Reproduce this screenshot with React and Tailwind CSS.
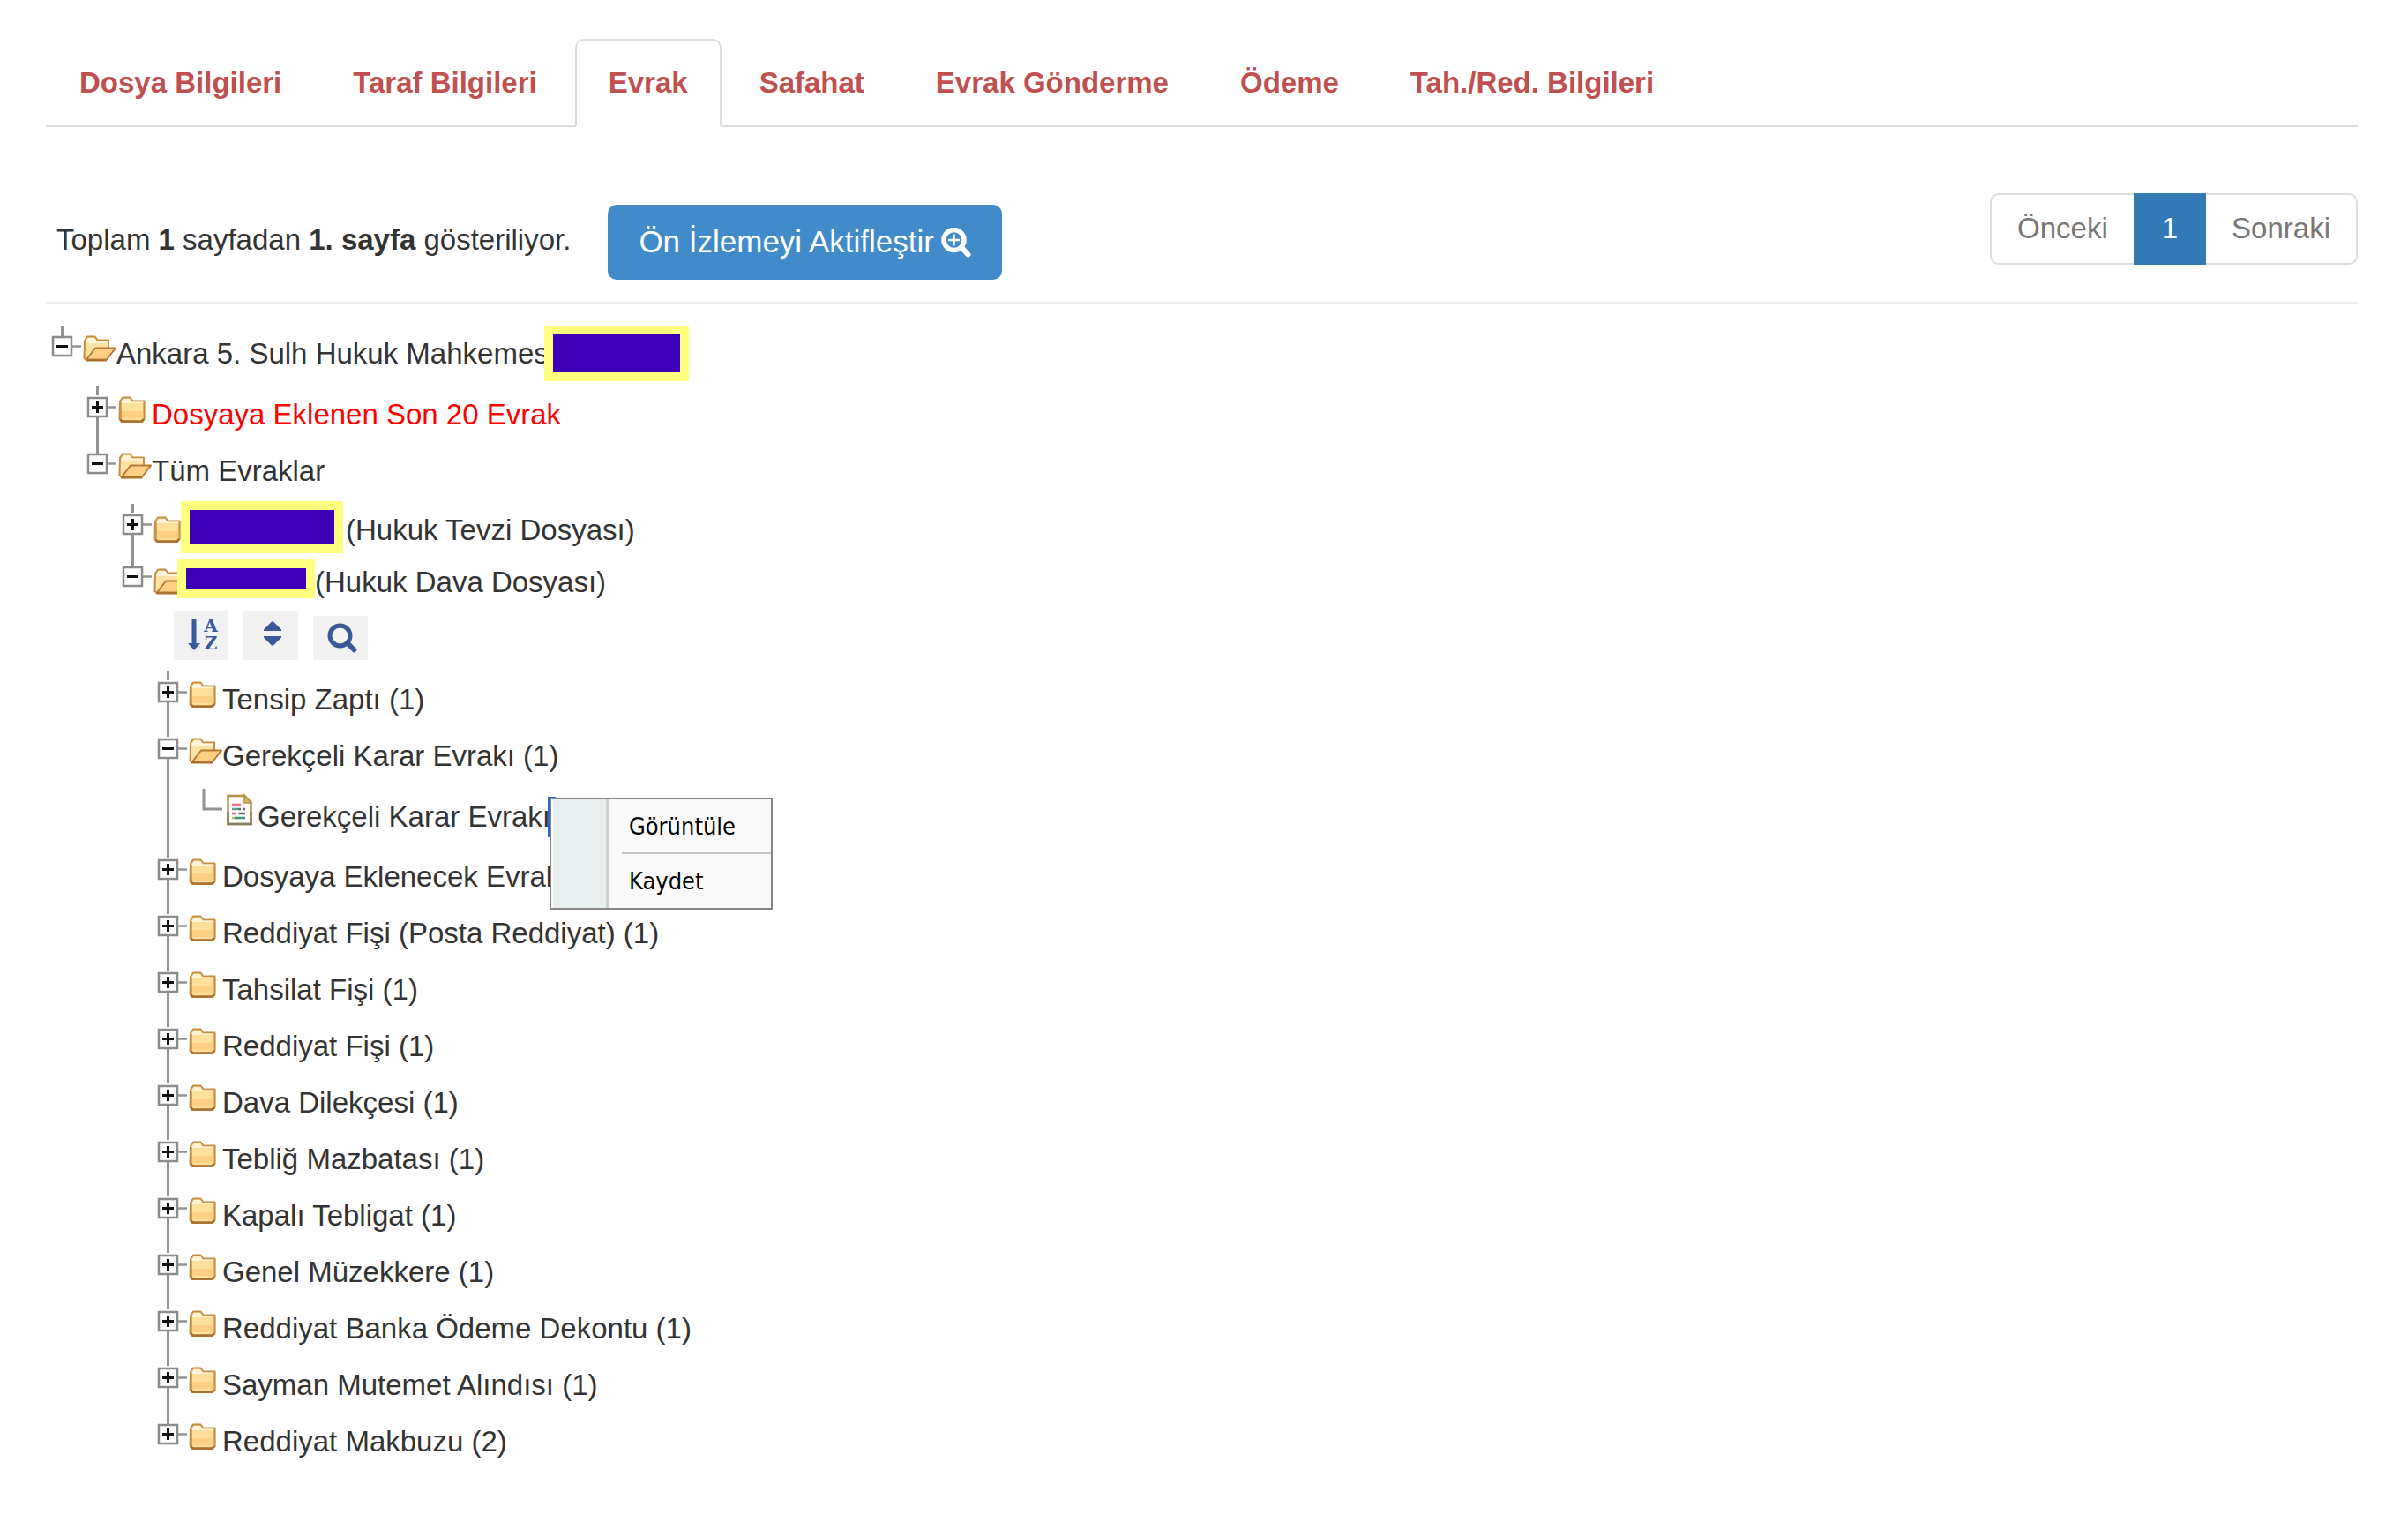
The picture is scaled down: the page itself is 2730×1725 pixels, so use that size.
const TEXT = "text-[33px] leading-[64px] whitespace-pre";

function ClosedFolder() {
  return (
    <svg className="h-[47px] w-10 shrink-0" viewBox="0 0 40 47" aria-hidden="true">
      <path d="M4 17 L7 12.5 H15.500 L18.500 16.500 H31.500 V37 L29 40 H6 L3.500 37 Z" fill="#ffdf9c" stroke="#c58e42" strokeWidth="2" strokeLinejoin="round" />
      <path d="M8 14 H15 L17.500 17.500 H30.500 V19 H5 Z" fill="#fff3d9" />
      <path d="M5 28 H30.500 V36 H5 Z" fill="#ffd083" />
      <path d="M5 18 V37 M31.500 17 V37" stroke="#c98f43" strokeWidth="1.500" fill="none" />
      <path d="M4.500 37.500 L6.500 39.500 H28.500 L31 37" stroke="#a96f2c" strokeWidth="2.500" fill="none" />
    </svg>
  );
}

function OpenFolder() {
  return (
    <svg className="h-[47px] w-10 shrink-0" viewBox="0 0 40 47" aria-hidden="true">
      <path d="M4 17 L7 12.500 H15.500 L18.500 16.500 H31 V28 L28 39 H6 L3.500 37 Z" fill="#ffe2a6" stroke="#c58e42" strokeWidth="2" strokeLinejoin="round" />
      <path d="M8 14 H15 L17.500 17.500 H30 V20 H5 Z" fill="#fff3d9" />
      <path d="M6 38.500 L16 25.500 H39 L29 38.500 Z" fill="#ffd083" stroke="#b57a33" strokeWidth="2" strokeLinejoin="round" />
      <path d="M5 39.500 H29" stroke="#a96f2c" strokeWidth="2" />
    </svg>
  );
}

function DocumentIcon() {
  return (
    <svg className="h-[47px] w-10 shrink-0" viewBox="0 0 40 47" aria-hidden="true">
      <path d="M6.500 8 H25 L32.500 15.500 V40 H6.500 Z" fill="#fdfdfb" stroke="#b0944a" strokeWidth="2.500" />
      <path d="M6.500 26 V40 H32.500 V26" fill="none" stroke="#858064" strokeWidth="2.500" />
      <path d="M25 7 V16 H33 Z" fill="#d3b566" stroke="#b0944a" strokeWidth="1.500" />
      <path d="M11 18 H21" stroke="#f9707c" strokeWidth="2.500" />
      <path d="M11 23 H18" stroke="#57a18d" strokeWidth="2.500" />
      <path d="M18 23 H21 M24 23 H26" stroke="#6a6a5c" strokeWidth="2.500" />
      <path d="M11 28 H16" stroke="#f0606a" strokeWidth="2.500" />
      <path d="M18.500 28 H26" stroke="#5d6a5a" strokeWidth="2.500" />
      <path d="M11 33 H14" stroke="#d5b070" strokeWidth="2.500" />
      <path d="M14 33 H26" stroke="#3a9a7c" strokeWidth="2.500" />
    </svg>
  );
}

function Toggle({ open, joined, label }) {
  return (
    <button type="button" aria-expanded={!!open} aria-label={label} className="relative h-[47px] w-10 shrink-0">
      <svg className="h-[47px] w-10" viewBox="0 0 40 47" aria-hidden="true">
        <path d={joined ? "M18.500 0 V13" : "M18.500 0 V10"} stroke="#939393" strokeWidth="3" />
        <path d="M30 23.500 H40" stroke="#939393" strokeWidth="2.500" />
        <rect x="8" y="13" width="21" height="21" fill="#fff" stroke="#8c8c8c" strokeWidth="2.500" />
        <path d="M12 23.500 H25" stroke="#111" strokeWidth="3" />
        {!open && <path d="M18.500 17 V30" stroke="#111" strokeWidth="3" />}
      </svg>
    </button>
  );
}

/* Vertical connector that runs from one toggle down to the next sibling. */
function Connector() {
  return <span className="absolute top-[35px] bottom-0 left-[17px] w-[3px] bg-[#939393]" />;
}

function Node({ label, open, last, children, tone = "", row = "", text = "", mask, folder = "" }) {
  return (
    <li className="relative">
      {!last && <Connector />}
      <div className={"flex items-start " + row}>
        <Toggle open={open} joined={last} label={label} />
        <span className={folder}>{open ? <OpenFolder /> : <ClosedFolder />}</span>
        {mask}
        <span className={TEXT + " " + tone + " " + text}>{label}</span>
      </div>
      {children}
    </li>
  );
}

function Tool({ label, className, children }) {
  return (
    <button type="button" aria-label={label} className={"flex w-[62px] items-center justify-center bg-[#f2f2f2] text-[#3b5998] " + className}>
      {children}
    </button>
  );
}

function ContextMenu() {
  return (
    <div role="menu" className="absolute top-[10px] left-full z-10 -ml-px flex w-[253px] border-2 border-[#858585] bg-[#fafafa] font-['DejaVu_Sans_Condensed','DejaVu_Sans',sans-serif] text-[27px] text-black">
      <div className="ml-[2px] w-[64px] border-r-4 border-[#cdd1d0] bg-[#e8efee]" />
      <div className="flex flex-1 flex-col pl-[14px]">
        <button role="menuitem" type="button" className="h-[62px] border-b-2 border-[#c4c4c4] pt-[2px] pl-2 text-left">Görüntüle</button>
        <button role="menuitem" type="button" className="h-[61px] pt-[2px] pl-2 text-left">Kaydet</button>
      </div>
    </div>
  );
}

const TABS = ["Dosya Bilgileri", "Taraf Bilgileri", "Evrak", "Safahat", "Evrak Gönderme", "Ödeme", "Tah./Red. Bilgileri"];

const FOLDERS = [
  "Dosyaya Eklenecek Evrak (1)",
  "Reddiyat Fişi (Posta Reddiyat) (1)",
  "Tahsilat Fişi (1)",
  "Reddiyat Fişi (1)",
  "Dava Dilekçesi (1)",
  "Tebliğ Mazbatası (1)",
  "Kapalı Tebligat (1)",
  "Genel Müzekkere (1)",
  "Reddiyat Banka Ödeme Dekontu (1)",
  "Sayman Mutemet Alındısı (1)",
  "Reddiyat Makbuzu (2)",
];

export default function App() {
  return (
    <div className="min-h-screen bg-white pt-11 pr-[57px] pb-12 pl-[52px] font-['Liberation_Sans',Arial,sans-serif] text-[33px] text-[#333]">
      <nav className="flex gap-[5px] border-b-2 border-[#ddd]">
        {TABS.map((tab) => (
          <a
            key={tab}
            href="#"
            aria-current={tab === "Evrak" ? "page" : undefined}
            className={
              "-mb-[2px] rounded-t-[10px] border-2 px-9 pt-[25px] pb-[25px] leading-[46px] font-bold text-[#c0504f] " +
              (tab === "Evrak" ? "border-[#ddd] border-b-white bg-white" : "border-transparent")
            }
          >
            {tab}
          </a>
        ))}
      </nav>

      <div className="flex items-start justify-between border-b-2 border-[#eee] pt-[75px] pb-[25px]">
        <div className="flex items-center gap-[42px] pt-[13px] pl-3">
          <p className="pb-[6px]">
            Toplam <b>1</b> sayfadan <b>1. sayfa</b> gösteriliyor.
          </p>
          <button type="button" className="flex h-[85px] items-center gap-2 rounded-[10px] bg-[#428bca] px-[35px] text-[35px] text-white">
            Ön İzlemeyi Aktifleştir
            <svg className="h-[34px] w-[34px]" viewBox="0 0 34 34" fill="none" stroke="currentColor" aria-hidden="true">
              <circle cx="14.500" cy="14" r="11.500" strokeWidth="5.500" />
              <path d="M24 23.500 L30.500 30.500" strokeWidth="6" strokeLinecap="round" />
              <path d="M14.500 7.500 V20.500 M8 14 H21" strokeWidth="2.500" />
            </svg>
          </button>
        </div>
        <nav aria-label="Sayfalar" className="flex text-[#777]">
          <button type="button" className="h-[81px] rounded-l-[10px] border-2 border-r-0 border-[#ddd] px-[29px] pb-[2px]">Önceki</button>
          <button type="button" aria-current="page" className="h-[81px] bg-[#337ab7] px-8 pb-[2px] text-white">1</button>
          <button type="button" className="h-[81px] rounded-r-[10px] border-2 border-l-0 border-[#ddd] px-[29px] pb-[2px]">Sonraki</button>
        </nav>
      </div>

      <ul className="pt-[25px]">
        <li>
          <div className="flex items-start">
            <Toggle open joined label="Ankara 5. Sulh Hukuk Mahkemesi" />
            <OpenFolder />
            <span className={TEXT}>Ankara 5. Sulh Hukuk Mahkemesi</span>
            <span className="relative -ml-[12px] h-[63px] w-[164px] border-10 border-[#ffff80] bg-[#3e00b7]" />
          </div>
          <ul className="pt-[5px] pl-10">
            <Node label="Dosyaya Eklenen Son 20 Evrak" tone="text-[#ff0000]" />
            <Node label="Tüm Evraklar" open last>
              <ul className="pt-[5px] pl-10">
                <Node
                  label="(Hukuk Tevzi Dosyası)"
                  row="h-[59px]"
                  folder="pt-[3px]"
                  text="pl-[3px] -mt-[2px]"
                  mask={<span className="relative -mt-[3px] -ml-[7px] h-[59px] w-[184px] border-10 border-[#ffff80] bg-[#3e00b7]" />}
                />
                <Node
                  label="(Hukuk Dava Dosyası)"
                  open
                  last
                  folder="pt-[3px]"
                  text="-mt-[2px]"
                  mask={<span className="relative mt-1 -ml-[11px] h-[44px] w-[156px] border-10 border-[#ffff80] bg-[#3e00b7]" />}
                >
                  <div className="flex items-end gap-[17px] pt-px pl-[65px]">
                    <Tool label="Sırala" className="h-[55px] gap-1 pb-1 pl-1">
                      <svg className="h-[36px] w-[14px]" viewBox="0 0 14 36" aria-hidden="true">
                        <path d="M4.500 0 H9.500 V28 H14 L7 36 L0 28 H4.500 Z" fill="currentColor" />
                      </svg>
                      <span className="flex flex-col font-['DejaVu_Serif',serif] text-[20px] leading-5 font-bold">
                        <span>A</span>
                        <span>Z</span>
                      </span>
                    </Tool>
                    <Tool label="Genişlet veya daralt" className="h-[55px] pb-[6px] pl-1">
                      <svg className="h-[28px] w-5" viewBox="0 0 20 28" aria-hidden="true">
                        <path d="M0 11 V9.500 L9 0.500 H11 L20 9.500 V11 Z M0 17 V18.500 L9 27.500 H11 L20 18.500 V17 Z" fill="currentColor" />
                      </svg>
                    </Tool>
                    <Tool label="Ara" className="h-[50px] pl-1">
                      <svg className="h-[34px] w-[34px]" viewBox="0 0 34 34" fill="none" stroke="currentColor" aria-hidden="true">
                        <circle cx="14.500" cy="14.500" r="11.500" strokeWidth="5" />
                        <path d="M24 24 L30.500 30.500" strokeWidth="5.500" strokeLinecap="round" />
                      </svg>
                    </Tool>
                  </div>
                  <ul className="pt-[13px] pl-10">
                    <Node label="Tensip Zaptı (1)" />
                    <Node label="Gerekçeli Karar Evrakı (1)" open>
                      <div className="flex items-start pt-[5px] pb-1 pl-10">
                        <svg className="h-[47px] w-10 shrink-0" viewBox="0 0 40 47" aria-hidden="true">
                          <path d="M19 0 V23 H40" fill="none" stroke="#939393" strokeWidth="3" />
                        </svg>
                        <DocumentIcon />
                        <div className="relative">
                          <span className={TEXT}>Gerekçeli Karar Evrakı</span>
                          <span className="absolute top-[9px] left-full -ml-[3px] h-[46px] w-[9px] bg-[#3166cc]" />
                          <ContextMenu />
                        </div>
                      </div>
                    </Node>
                    {FOLDERS.map((name, i) => (
                      <Node key={name} label={name} last={i === FOLDERS.length - 1} />
                    ))}
                  </ul>
                </Node>
              </ul>
            </Node>
          </ul>
        </li>
      </ul>
    </div>
  );
}
